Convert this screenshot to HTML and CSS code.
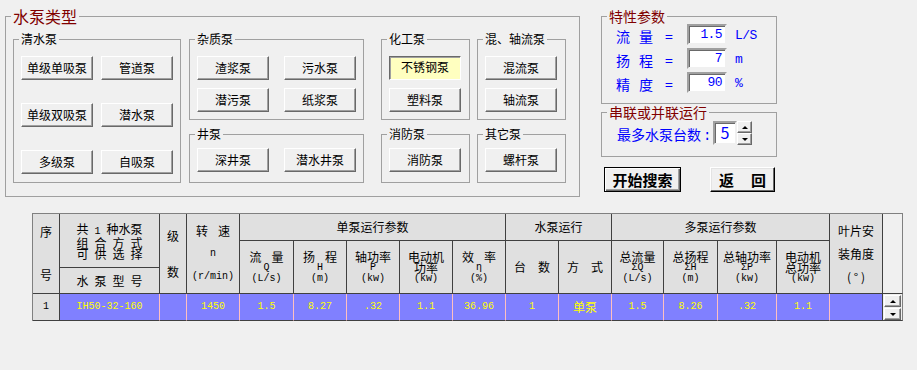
FILE: index.html
```html
<!DOCTYPE html>
<html lang="zh-CN">
<head>
<meta charset="UTF-8">
<title>水泵选型</title>
<link rel="stylesheet" href="styles.css">
</head>
<body>

<div class="top">
  <fieldset class="grp main">
    <legend>水泵类型</legend>
    <div class="kinds">
      <div class="col c1">
        <fieldset class="grp qs">
          <legend>清水泵</legend>
          <div class="btns">
            <button class="btn">单级单吸泵</button>
            <button class="btn">管道泵</button>
            <button class="btn">单级双吸泵</button>
            <button class="btn">潜水泵</button>
            <button class="btn">多级泵</button>
            <button class="btn">自吸泵</button>
          </div>
        </fieldset>
      </div>
      <div class="col c2">
        <fieldset class="grp zz">
          <legend>杂质泵</legend>
          <div class="btns">
            <button class="btn">渣浆泵</button>
            <button class="btn">污水泵</button>
            <button class="btn">潜污泵</button>
            <button class="btn">纸浆泵</button>
          </div>
        </fieldset>
        <fieldset class="grp jb">
          <legend>井泵</legend>
          <div class="btns">
            <button class="btn">深井泵</button>
            <button class="btn">潜水井泵</button>
          </div>
        </fieldset>
      </div>
      <div class="col c3">
        <fieldset class="grp zz">
          <legend>化工泵</legend>
          <div class="btns one">
            <button class="btn down">不锈钢泵</button>
            <button class="btn">塑料泵</button>
          </div>
        </fieldset>
        <fieldset class="grp jb">
          <legend>消防泵</legend>
          <div class="btns one">
            <button class="btn">消防泵</button>
          </div>
        </fieldset>
      </div>
      <div class="col c4">
        <fieldset class="grp zz">
          <legend>混、轴流泵</legend>
          <div class="btns one">
            <button class="btn">混流泵</button>
            <button class="btn">轴流泵</button>
          </div>
        </fieldset>
        <fieldset class="grp jb">
          <legend>其它泵</legend>
          <div class="btns one">
            <button class="btn">螺杆泵</button>
          </div>
        </fieldset>
      </div>
    </div>
  </fieldset>

  <div class="side">
    <fieldset class="grp param">
      <legend>特性参数</legend>
      <div class="prows">
        <div class="prow"><span class="lbl">流量</span><span class="eq">=</span><span class="val">1.5</span><span class="unit">L/S</span></div>
        <div class="prow"><span class="lbl">扬程</span><span class="eq">=</span><span class="val">7</span><span class="unit">m</span></div>
        <div class="prow"><span class="lbl">精度</span><span class="eq">=</span><span class="val">90</span><span class="unit">%</span></div>
      </div>
    </fieldset>
    <fieldset class="grp run">
      <legend>串联或并联运行</legend>
      <div class="rrow">
        <span class="rlbl">最多水泵台数<span class="colon">:</span></span>
        <div class="spin">
          <span class="spin-val">5</span>
          <div class="spin-btns">
            <button class="sb"><span class="tri up"></span></button>
            <button class="sb"><span class="tri dn"></span></button>
          </div>
        </div>
      </div>
    </fieldset>
    <div class="actions">
      <button class="act def">开始搜索</button>
      <button class="act back"><span class="gap">返回</span></button>
    </div>
  </div>
</div>

<table class="grid">
  <colgroup>
    <col style="width:27px"><col style="width:100px"><col style="width:27px"><col style="width:53px">
    <col style="width:54px"><col style="width:53px"><col style="width:53px"><col style="width:53px">
    <col style="width:53px"><col style="width:53px"><col style="width:53px"><col style="width:52px">
    <col style="width:54px"><col style="width:59px"><col style="width:53px"><col style="width:53px">
    <col style="width:20px">
  </colgroup>
  <tr class="ra">
    <td rowspan="3" class="h"><div class="two"><span>序</span><span>号</span></div></td>
    <td rowspan="2" class="h">
      <div class="stack">
        <span>共<span class="m"> 1 </span>种水泵</span>
        <span><span class="ls">组合方式</span></span>
        <span><span class="ls">可供选择</span></span>
      </div>
    </td>
    <td rowspan="3" class="h"><div class="two jishu"><span>级</span><span>数</span></div></td>
    <td rowspan="3" class="h"><div class="tall"><span><span class="sp">转速</span></span><span class="m">n</span><span class="m">(r/min)</span></div></td>
    <td colspan="5" class="h">单泵运行参数</td>
    <td colspan="2" class="h">水泵运行</td>
    <td colspan="4" class="h">多泵运行参数</td>
    <td rowspan="3" class="h"><div class="tall"><span>叶片安</span><span>装角度</span><span>(&nbsp;°&nbsp;)</span></div></td>
    <td rowspan="3" class="blank"></td>
  </tr>
  <tr class="rb">
    <td rowspan="2" class="h"><div class="three"><span><span class="sp">流量</span></span><span class="m">Q</span><span class="m">(L/s)</span></div></td>
    <td rowspan="2" class="h"><div class="three"><span><span class="sp">扬程</span></span><span class="m">H</span><span class="m">(m)</span></div></td>
    <td rowspan="2" class="h"><div class="three"><span>轴功率</span><span class="m">P</span><span class="m">(kw)</span></div></td>
    <td rowspan="2" class="h"><div class="three"><span>电动机</span><span>功率</span><span class="m">(kw)</span></div></td>
    <td rowspan="2" class="h"><div class="three"><span><span class="sp">效率</span></span><span class="m">η</span><span class="m">(%)</span></div></td>
    <td rowspan="2" class="h"><span class="sp wide">台数</span></td>
    <td rowspan="2" class="h"><span class="sp wide">方式</span></td>
    <td rowspan="2" class="h"><div class="three"><span>总流量</span><span class="m">ΣQ</span><span class="m">(L/s)</span></div></td>
    <td rowspan="2" class="h"><div class="three"><span>总扬程</span><span class="m">ΣH</span><span class="m">(m)</span></div></td>
    <td rowspan="2" class="h"><div class="three"><span>总轴功率</span><span class="m">ΣP</span><span class="m">(kw)</span></div></td>
    <td rowspan="2" class="h"><div class="three"><span>电动机</span><span>总功率</span><span class="m">(kw)</span></div></td>
  </tr>
  <tr class="rc">
    <td class="h"><span class="ls">水泵型号</span></td>
  </tr>
  <tr class="rd">
    <td class="h m ink">1</td>
    <td class="m">IH50-32-160</td>
    <td></td>
    <td class="m">1450</td>
    <td class="m">1.5</td>
    <td class="m">8.27</td>
    <td class="m">.32</td>
    <td class="m">1.1</td>
    <td class="m">36.96</td>
    <td class="m">1</td>
    <td>单泵</td>
    <td class="m">1.5</td>
    <td class="m">8.26</td>
    <td class="m">.32</td>
    <td class="m">1.1</td>
    <td class="last"></td>
    <td class="scroll">
      <div class="sbar">
        <button class="sb wide-sb"><span class="tri up"></span></button>
        <button class="sb wide-sb"><span class="tri dn"></span></button>
      </div>
    </td>
  </tr>
</table>

</body>
</html>
```

FILE: styles.css
```css
* {
  box-sizing: border-box;
}

body {
  margin: 0;
  background: #f0f0f0;
  font-family: "Noto Sans CJK SC", sans-serif;
  font-size: 12px;
  color: #000;
}

/* top part: pump kinds + search settings */
.top {
  display: flex;
  align-items: flex-start;
  height: 213px;
  padding: 7px 0 0 5px;
}

fieldset.grp {
  margin: 0;
  padding: 0;
  min-width: 0;
  border: 1px solid #a0a0a0;
}

.grp > legend {
  margin-left: 5px;
  padding: 0 2px;
  font-size: 12px;
  line-height: 14px;
}

.main {
  width: 575px;
  height: 190px;
}

.main > legend {
  font-size: 16px;
  line-height: 18px;
  color: #800000;
}

.kinds {
  display: flex;
  padding: 7px 0 0 7px;
}

.col {
  display: flex;
  flex-direction: column;
  gap: 7px;
}

.c1 { width: 168px; }
.c2 { width: 175px; margin-left: 8px; }
.c3 { width: 89px; margin-left: 17px; }
.c4 { width: 89px; margin-left: 7px; }

.qs { height: 151px; }
.zz { height: 88px; }
.jb { height: 56px; }

.btns {
  display: grid;
  grid-template-columns: 72px 72px;
  padding: 10px 0 0 7px;
}

.qs .btns {
  column-gap: 8px;
  row-gap: 23px;
}

.zz .btns {
  column-gap: 15px;
  row-gap: 8px;
}

.jb .btns {
  column-gap: 15px;
  padding-top: 7px;
}

.btns.one {
  grid-template-columns: 72px;
}

.btn {
  width: 72px;
  height: 24px;
  padding: 0;
  font-family: inherit;
  font-size: 12px;
  line-height: 14px;
  color: #000;
  background: #f0f0f0;
  border: 1px solid;
  border-color: #fff #696969 #696969 #fff;
  box-shadow: inset -1px -1px #a0a0a0;
}

.btn.down {
  background: #ffffc0;
  border-color: #696969 #fff #fff #696969;
  box-shadow: inset 1px 1px #a0a0a0;
  padding-bottom: 3px;
}

/* right side */
.side {
  width: 176px;
  margin: 1px 0 0 21px;
}

.side .grp > legend {
  font-size: 14px;
  line-height: 16px;
  color: #800000;
}

.param {
  height: 96px;
}

.prows {
  display: flex;
  flex-direction: column;
  gap: 4px;
}

.prow {
  display: flex;
  height: 20px;
  padding-left: 14px;
  color: #0000ff;
  font-size: 14px;
}

.lbl {
  width: 49px;
  padding-top: 5px;
  line-height: 14px;
  letter-spacing: 9px;
}

.eq {
  width: 22px;
  padding-top: 5px;
  line-height: 14px;
}

.val {
  width: 40px;
  height: 21px;
  padding-right: 3px;
  text-align: right;
  font-family: "Liberation Mono", monospace;
  font-size: 13px;
  letter-spacing: -0.6px;
  line-height: 17px;
  background: #fff;
  border: 2px solid;
  border-color: #a0a0a0 #f0f0f0 #f0f0f0 #a0a0a0;
  box-shadow: inset 1px 1px #696969;
}

.unit {
  margin-left: 8px;
  padding-top: 5px;
  line-height: 14px;
  font-family: "Liberation Mono", monospace;
  font-size: 13px;
  letter-spacing: -0.6px;
}

.run {
  height: 53px;
  margin-top: 8px;
}

.rrow {
  display: flex;
  padding: 1px 0 0 15px;
}

.rlbl {
  width: 96px;
  padding-top: 6px;
  color: #0000ff;
  font-size: 14px;
  line-height: 14px;
}

.colon {
  margin-left: 2px;
  font-family: "Liberation Mono", monospace;
}

.spin {
  display: flex;
}

.spin-val {
  width: 24px;
  height: 24px;
  text-align: center;
  color: #0000ff;
  font-size: 16px;
  line-height: 19px;
  background: #fff;
  border: 2px solid;
  border-color: #a0a0a0 #f0f0f0 #f0f0f0 #a0a0a0;
  box-shadow: inset 1px 1px #696969;
}

.spin-btns {
  display: flex;
  flex-direction: column;
}

.sb {
  width: 15px;
  height: 12px;
  padding: 0;
  display: flex;
  align-items: center;
  justify-content: center;
  background: #f0f0f0;
  border: 1px solid;
  border-color: #fff #696969 #696969 #fff;
  box-shadow: inset -1px -1px #a0a0a0;
}

.tri {
  width: 0;
  height: 0;
  border-left: 3px solid transparent;
  border-right: 3px solid transparent;
}

.tri.up {
  border-bottom: 3px solid #000;
}

.tri.dn {
  border-top: 3px solid #000;
}

.actions {
  display: flex;
  gap: 29px;
  margin-top: 10px;
  padding-left: 3px;
}

.act {
  height: 25px;
  padding: 0;
  white-space: nowrap;
  font-family: inherit;
  font-size: 15px;
  font-weight: bold;
  line-height: 17px;
  color: #000;
  background: #f0f0f0;
}

.act.def {
  width: 77px;
  border: 1px solid #000;
  box-shadow: inset 1px 1px #fff, inset -1px -1px #696969, inset -2px -2px #a0a0a0;
}

.act.back {
  width: 65px;
  border: 1px solid;
  border-color: #fff #000 #000 #fff;
  box-shadow: inset -1px -1px #696969, inset 1px 1px #e3e3e3;
}

.act .gap {
  display: inline-block;
  letter-spacing: 17px;
  margin-right: -17px;
}

/* result grid */
.grid {
  margin-left: 32px;
  width: 871px;
  table-layout: fixed;
  border-collapse: separate;
  border-spacing: 0;
  border-left: 1px solid #808080;
  border-top: 1px solid #808080;
}

.grid td {
  padding: 0;
  overflow: hidden;
  white-space: nowrap;
  text-align: center;
  vertical-align: middle;
  line-height: 12px;
  border-right: 1px solid #404040;
  border-bottom: 1px solid #404040;
}

.ra { height: 27px; }
.rb { height: 27px; }
.rc { height: 26px; }
.rd { height: 27px; }

.grid .h {
  background: #e0e0e0;
  color: #000;
}

.grid .blank {
  background: #f0f0f0;
  border-right-color: #808080;
}

.m {
  font-family: "Liberation Mono", monospace;
  font-size: 10px;
}

.two span {
  display: block;
  line-height: 14px;
}

.two span + span {
  margin-top: 29px;
}

.two.jishu span + span {
  margin-top: 22px;
}

.stack > span,
.three > span {
  display: block;
  line-height: 11px;
}

.ls {
  display: inline-block;
  letter-spacing: 6px;
  margin-right: -6px;
}

.tall > span {
  display: block;
  line-height: 23px;
}

.sp {
  display: inline-block;
  letter-spacing: 10px;
  margin-right: -10px;
}

.sp.wide {
  letter-spacing: 12px;
  margin-right: -12px;
}

.rd td {
  background: #8080ff;
  color: #ffff00;
  border-right-color: #ffc0c0;
}

.rd td.ink {
  color: #000;
  background: #e0e0e0;
  border-right-color: #404040;
}

.rd td.last {
  border-right-color: #404040;
}

.rd td.scroll {
  background: #f0f0f0;
  border-right-color: #808080;
  vertical-align: top;
}

.sbar {
  display: flex;
  flex-direction: column;
  gap: 1px;
  padding: 1px 0 0 1px;
}

.sb.wide-sb {
  width: 17px;
}
```
